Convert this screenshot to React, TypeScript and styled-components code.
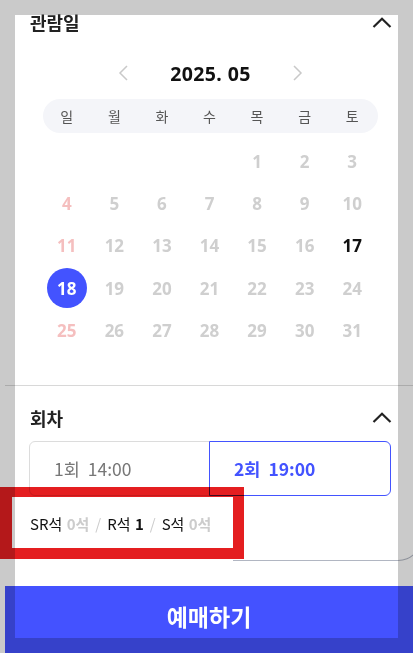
import React, { useState } from 'react';
import styled, { createGlobalStyle } from 'styled-components';

const GlobalStyle = createGlobalStyle`
  html, body {
    margin: 0;
    padding: 0;
    background: #cacaca;
    overflow: hidden;
  }
  body {
    font-family: "Noto Sans", "Noto Sans CJK KR", sans-serif;
  }
`;

const Frame = styled.div`
  position: relative;
  width: 413px;
  height: 653px;
  overflow: hidden;
`;

const Screen = styled.div`
  margin: 15px 0 0 15px;
  width: 383px;
  height: 623px;
  background: #ffffff;
  display: flex;
  flex-direction: column;
  & > * {
    flex-shrink: 0;
  }
`;

const SectionHeader = styled.div<{ $top: number }>`
  display: flex;
  align-items: center;
  justify-content: space-between;
  height: 18px;
  margin-top: ${p => p.$top}px;
  padding: 0 6px 0 15px;
`;

const SectionTitle = styled.h2`
  margin: 0;
  font-family: "Noto Sans CJK KR", sans-serif;
  font-size: 18px;
  font-weight: 700;
  color: #222;
  line-height: 18px;
`;

const Calendar = styled.div`
  margin: 30px 20px 0 28px;
  display: flex;
  flex-direction: column;
`;

const MonthNav = styled.div`
  display: flex;
  align-items: center;
  justify-content: center;
  gap: 41px;
  height: 24px;
`;

const NavArrow = styled.button`
  border: none;
  background: none;
  padding: 0;
  width: 11px;
  height: 16px;
  display: flex;
  cursor: pointer;
`;

const MonthLabel = styled.span`
  font-family: "Noto Sans", sans-serif;
  font-size: 19.5px;
  font-weight: 700;
  color: #111;
  letter-spacing: 0.4px;
`;

const WeekPill = styled.div`
  margin-top: 14px;
  height: 34px;
  border-radius: 17px;
  background: #f4f5f9;
  display: grid;
  grid-template-columns: repeat(7, 1fr);
  padding-right: 2px;
  align-items: center;
`;

const WeekDay = styled.span`
  text-align: center;
  font-family: "Noto Sans CJK KR", sans-serif;
  font-size: 14px;
  color: #555;
`;

const DayGrid = styled.div`
  margin-top: 7px;
  display: grid;
  grid-template-columns: repeat(7, 1fr);
  grid-auto-rows: 42.4px;
  padding-right: 2px;
`;

type DayTone = 'off' | 'sunday' | 'open' | 'picked';

const dayColors: Record<DayTone, string> = {
  off: '#cfcfcf',
  sunday: '#f5bfbf',
  open: '#111111',
  picked: '#ffffff',
};

const Day = styled.span<{ $tone: DayTone }>`
  display: flex;
  align-items: center;
  justify-content: center;
  font-family: "Noto Sans", sans-serif;
  font-size: 17px;
  font-weight: 700;
  color: ${p => dayColors[p.$tone]};
`;

const DayCircle = styled.span`
  width: 40px;
  height: 40px;
  border-radius: 50%;
  background: #4353ff;
  display: flex;
  align-items: center;
  justify-content: center;
`;

const Divider = styled.hr`
  margin: 33px -15px 0 -10px;
  border: none;
  height: 1px;
  background: #d8d8d8;
  mix-blend-mode: multiply;
`;

const SessionGroup = styled.div`
  margin: 14px 7px 0 14px;
  height: 55px;
  display: grid;
  grid-template-columns: 1fr 1fr;
`;

const SessionButton = styled.button<{ $active: boolean }>`
  border: 1px solid ${p => (p.$active ? '#4353ff' : '#dcdcdc')};
  background: #fff;
  text-align: left;
  padding: 0 0 0 24px;
  font-family: "Noto Sans CJK KR", sans-serif;
  font-size: 17.5px;
  font-weight: ${p => (p.$active ? 700 : 400)};
  color: ${p => (p.$active ? '#4353ff' : '#777')};
  word-spacing: 4px;
  cursor: pointer;
  &:first-child {
    border-radius: 6px 0 0 6px;
  }
  &:last-child {
    border-radius: 0 6px 6px 0;
    margin-left: -1px;
  }
`;

const SeatInfo = styled.p`
  margin: 18px 0 0 15px;
  height: 20px;
  line-height: 20px;
  font-family: "Noto Sans CJK KR", sans-serif;
  font-size: 15px;
  color: #111;
  word-spacing: 1px;
`;

const SeatCount = styled.b<{ $empty?: boolean }>`
  color: ${p => (p.$empty ? '#cccccc' : '#111')};
`;

const Slash = styled.span`
  color: #cccccc;
  margin: 0 6px;
`;

const BookButton = styled.button`
  margin: 52px -15px 0 -10px;
  height: 67px;
  padding-bottom: 8px;
  border: none;
  background: #4452ff;
  mix-blend-mode: multiply;
  color: #fff;
  font-family: "Noto Sans CJK KR", sans-serif;
  font-size: 23px;
  font-weight: 700;
  cursor: pointer;
`;

const SheetEdge = styled.div`
  position: absolute;
  left: 233px;
  top: 386px;
  width: 189px;
  height: 175px;
  box-sizing: border-box;
  border-right: 1px solid #b1b6c2;
  border-bottom: 1px solid #b1b6c2;
  border-bottom-right-radius: 24px;
  mix-blend-mode: multiply;
  pointer-events: none;
`;

const Highlight = styled.div`
  position: absolute;
  left: 0;
  top: 487px;
  width: 244px;
  height: 72px;
  box-sizing: border-box;
  border-style: solid;
  border-color: #e41e20;
  border-width: 10px 11px 11px 12px;
  mix-blend-mode: multiply;
  pointer-events: none;
`;

const Chevron = ({ dir }: { dir: 'up' | 'left' | 'right' }) => {
  if (dir === 'up') {
    return (
      <svg width="20" height="11" viewBox="0 0 20 11">
        <polyline points="1.5,10 10,1.8 18.5,10" fill="none" stroke="#222" strokeWidth="2.2" />
      </svg>
    );
  }
  const pts = dir === 'left' ? '9,1 2,8 9,15' : '2,1 9,8 2,15';
  return (
    <svg width="11" height="16" viewBox="0 0 11 16">
      <polyline points={pts} fill="none" stroke="#c9c9c9" strokeWidth="1.5" />
    </svg>
  );
};

const weekDays = ['일', '월', '화', '수', '목', '금', '토'];

const App: React.FC = () => {
  const [picked, setPicked] = useState(18);
  const [session, setSession] = useState(2);

  // May 2025 starts on a Thursday
  const cells: (number | null)[] = [null, null, null, null];
  for (let d = 1; d <= 31; d++) cells.push(d);

  const toneOf = (d: number, i: number): DayTone => {
    if (d === picked) return 'picked';
    if (d === 17) return 'open';
    if (i % 7 === 0) return 'sunday';
    return 'off';
  };

  return (
    <Frame>
      <GlobalStyle />
      <Screen>
        <SectionHeader $top={-2}>
          <SectionTitle>관람일</SectionTitle>
          <Chevron dir="up" />
        </SectionHeader>

        <Calendar>
          <MonthNav>
            <NavArrow type="button"><Chevron dir="left" /></NavArrow>
            <MonthLabel>2025. 05</MonthLabel>
            <NavArrow type="button"><Chevron dir="right" /></NavArrow>
          </MonthNav>
          <WeekPill>
            {weekDays.map(w => <WeekDay key={w}>{w}</WeekDay>)}
          </WeekPill>
          <DayGrid>
            {cells.map((d, i) =>
              d === null ? (
                <span key={'e' + i} />
              ) : (
                <Day key={d} $tone={toneOf(d, i)} onClick={() => (d === 17 || d === 18) && setPicked(d)}>
                  {d === picked ? <DayCircle>{d}</DayCircle> : d}
                </Day>
              )
            )}
          </DayGrid>
        </Calendar>

        <Divider />

        <SectionHeader $top={23}>
          <SectionTitle>회차</SectionTitle>
          <Chevron dir="up" />
        </SectionHeader>

        <SessionGroup>
          <SessionButton type="button" $active={session === 1} onClick={() => setSession(1)}>1회 14:00</SessionButton>
          <SessionButton type="button" $active={session === 2} onClick={() => setSession(2)}>2회 19:00</SessionButton>
        </SessionGroup>

        <SeatInfo>
          SR석 <SeatCount $empty>0석</SeatCount>
          <Slash>/</Slash>
          R석 <SeatCount>1</SeatCount>
          <Slash>/</Slash>
          S석 <SeatCount $empty>0석</SeatCount>
        </SeatInfo>

        <BookButton type="button">예매하기</BookButton>
      </Screen>
      <SheetEdge />
      <Highlight />
    </Frame>
  );
};

export default App;
